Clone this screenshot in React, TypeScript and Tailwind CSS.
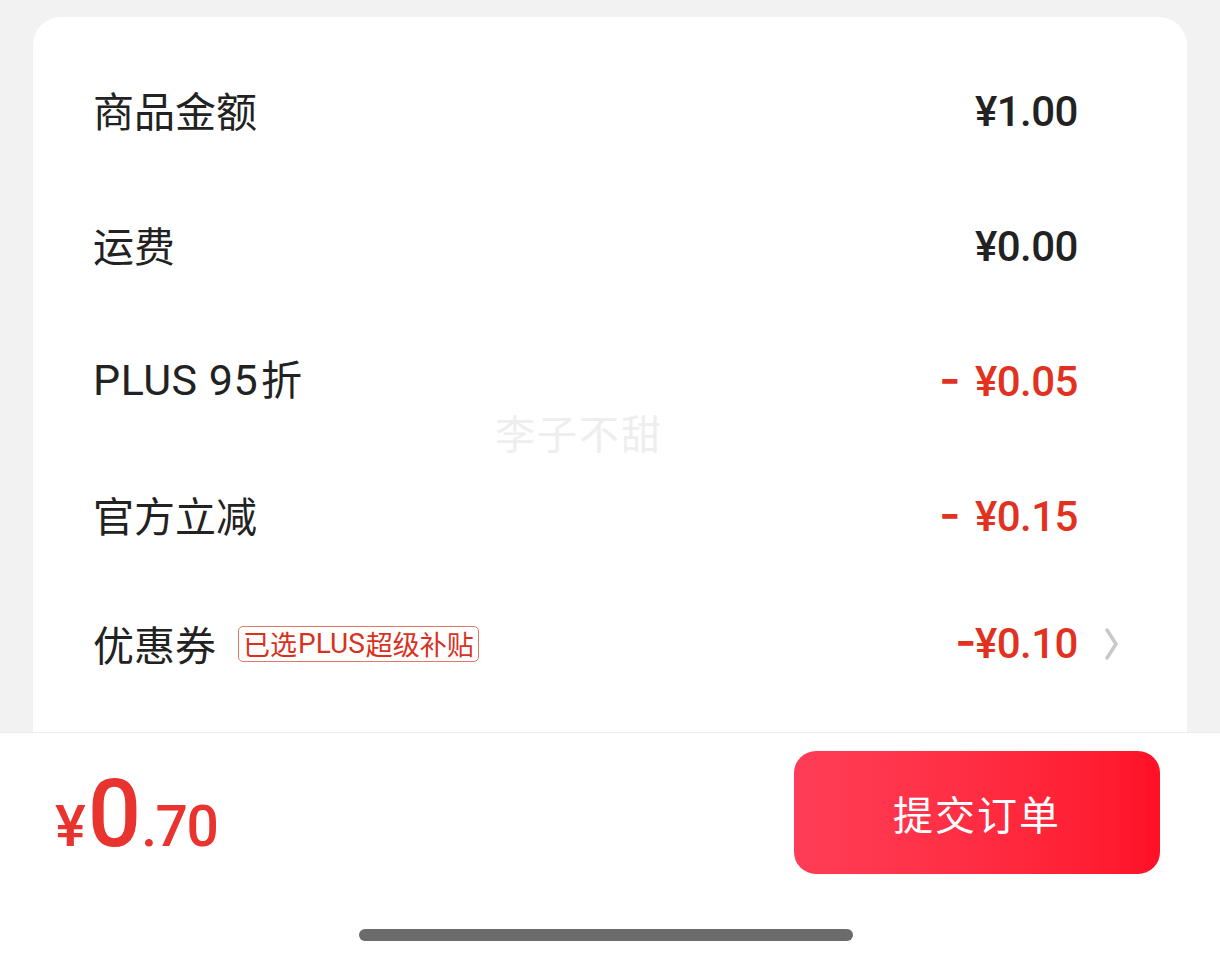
import React from "react";

const cjk = { fontFamily: '"Noto Sans CJK SC", "Noto Sans", sans-serif' };
const num = { fontFamily: 'Roboto, "Noto Sans CJK SC", sans-serif' };

function Value({ value, red, minus, gap }: { value: string; red?: boolean; minus?: boolean; gap?: boolean }) {
  return (
    <span
      style={num}
      className={`flex items-center text-[42px] font-medium tracking-[-0.5px] ${red ? "text-[#e2311f]" : "text-[#222]"}`}
    >
      {minus && <span className={`font-bold scale-x-[0.85] ${gap ? "mr-[14px]" : "-mr-[2px]"}`}>−</span>}
      {value}
    </span>
  );
}

function Row({ label, children }: { label: React.ReactNode; children: React.ReactNode }) {
  return (
    <div className="flex h-[135px] items-center justify-between">
      <div className="flex items-center -translate-y-[2px]">{label}</div>
      <div className="flex items-center">{children}</div>
    </div>
  );
}

export default function App() {
  const label = "text-[41px] text-[#222] leading-none";
  return (
    <div className="w-[1220px] h-[965px] flex flex-col bg-white overflow-hidden" style={cjk}>
      <div className="h-[732px] bg-[#f2f2f2] pt-[17px] px-[33px] flex flex-col">
        <div className="relative flex-1 bg-white rounded-t-[28px] pt-[44px] pl-[60px] pr-[109px]">
          <div className="-mt-[17px]">
            <Row label={<span className={label}>商品金额</span>}>
              <Value value="¥1.00" />
            </Row>
            <Row label={<span className={label}>运费</span>}>
              <Value value="¥0.00" />
            </Row>
            <Row
              label={
                <span className={label}>
                  <span style={num} className="text-[43px] tracking-[0.5px]">PLUS 95</span>
                  <span className="ml-[3px]">折</span>
                </span>
              }
            >
              <Value value="¥0.05" red minus gap />
            </Row>
            <Row label={<span className={label}>官方立减</span>}>
              <Value value="¥0.15" red minus gap />
            </Row>
            <div className="relative -mt-[8px] flex h-[135px] items-center justify-between">
              <div className="flex items-center">
                <span className={label}>优惠券</span>
                <span className="ml-[22px] h-[36px] px-[4px] flex items-center rounded-[5px] border border-[#e0786c] text-[#d8321f] text-[27px] leading-none">
                  已选<span style={num} className="text-[28px] mx-[1px]">PLUS</span>超级补贴
                </span>
              </div>
              <div className="flex items-center">
                <Value value="¥0.10" red minus />
              </div>
              <svg className="absolute right-[-42px] top-1/2 -translate-y-1/2" width="16" height="32" viewBox="0 0 16 32">
                <path d="M3 2 L12 16 L3 30" fill="none" stroke="#c8c8c8" strokeWidth="3.5" strokeLinecap="round" strokeLinejoin="round" />
              </svg>
            </div>
          </div>
          <div className="absolute left-[462px] top-[395px] text-[40px] text-[#eeeeee] leading-none tracking-[2px] pointer-events-none">
            李子不甜
          </div>
        </div>
      </div>
      <div className="flex-1 border-t border-[#ececec] bg-white flex flex-col">
        <div className="flex items-center justify-between pl-[55px] pr-[60px] pt-[18px]">
          <div className="flex items-baseline text-[#e8332f] font-medium leading-none mt-[2px]" style={num}>
            <span className="text-[58px]">¥</span>
            <span className="text-[94px] ml-[2px]">0</span>
            <span className="text-[57px] tracking-[-1.5px]">.70</span>
          </div>
          <button className="w-[366px] h-[123px] rounded-[22px] bg-gradient-to-r from-[#ff3d57] to-[#ff1027] text-white text-[40px] tracking-[2px]">
            提交订单
          </button>
        </div>
        <div className="mt-auto mb-[24px] flex justify-center">
          <div className="w-[494px] h-[12px] rounded-full bg-[#6b6b6b] -translate-x-[4px]" />
        </div>
      </div>
    </div>
  );
}
